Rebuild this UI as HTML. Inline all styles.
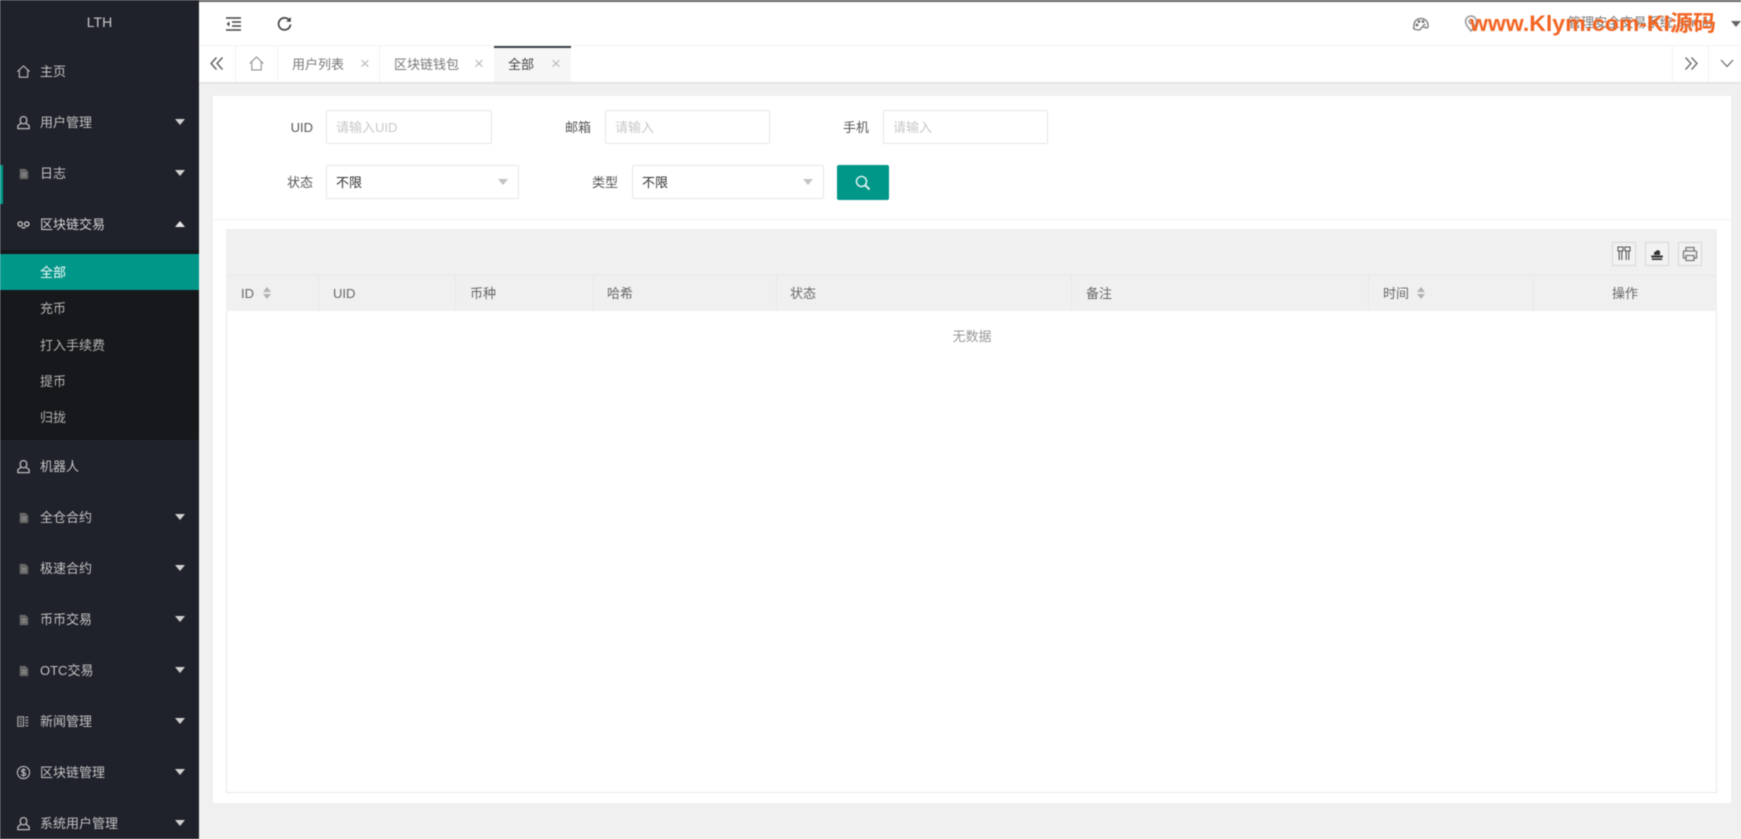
<!DOCTYPE html>
<html lang="zh"><head><meta charset="utf-8"><title>LTH</title>
<style>
*{box-sizing:border-box;margin:0;padding:0}
html{width:1741px;height:839px;overflow:hidden;background:#f0f0f0}
body{position:relative;width:1741px;height:839px;overflow:hidden;background:#f0f0f0;font:13px/20px "Liberation Sans","Noto Sans CJK SC",sans-serif;color:#666;filter:blur(.45px)}
.a{position:absolute;white-space:nowrap}
#side{position:absolute;left:0;top:0;width:199px;height:839px;background:#1f222b;overflow:hidden}
.m{position:absolute;left:40px;color:#c4c4c4;line-height:20px;white-space:nowrap;margin-top:1px}
.ic{position:absolute;left:16px;width:15px;height:15px}
.cd,.cu{position:absolute;left:175px;width:0;height:0;border-left:5.5px solid transparent;border-right:5.5px solid transparent}
.cd{border-top:6px solid #d0d0d0}.cu{border-bottom:6px solid #e8e8e8}
.inp{position:absolute;height:34px;background:#fff;border:1px solid #e6e6e6;border-radius:2px;padding-left:9px;line-height:33px;color:#c8c8c8}
.sel{color:#333}
.sel:after{content:"";position:absolute;right:10px;top:13px;border-left:5.5px solid transparent;border-right:5.5px solid transparent;border-top:6px solid #c2c2c2}
.lb{position:absolute;text-align:right;width:60px;line-height:20px;color:#555;margin-top:1px}
.div{position:absolute;top:46px;height:36px;width:1px;background:#f3f3f3}
.tt{position:absolute;top:55px;line-height:20px;color:#777}
.x{position:absolute;top:54px;line-height:20px;color:#bbb;font-size:17px}
.th{position:absolute;top:294px;transform:translateY(-50%);color:#666;line-height:20px}
.vl{position:absolute;top:275px;height:36px;width:1px;background:#e8e8e8}
.tb{position:absolute;top:242px;width:24px;height:24px;border:1px solid #d8d8d8;background:#f2f2f2}
.sort{position:absolute;width:8px;height:12px}
</style></head><body>
<div class="a" style="left:199px;top:0;width:1542px;height:46px;background:#fff;border-bottom:1px solid #f6f6f6"></div>
<div class="a" style="left:199px;top:0;width:1542px;height:1.5px;background:#666"></div>
<div class="a" style="left:199px;top:46px;width:1542px;height:36px;background:#fff;box-shadow:0 1px 2px rgba(0,0,0,.1)"></div>

<div id="side">
<div class="a" style="left:0;top:0;width:199px;height:45px;background:#1f222b;text-align:center;line-height:44px;font-size:14px;color:#c8c8c8">LTH</div>
<div class="a" style="left:0;top:165px;width:3px;height:39px;background:#009688"></div>
<div class="a" style="left:0;top:250px;width:199px;height:190px;background:#17181c"></div>
<div class="a" style="left:0;top:254px;width:199px;height:36px;background:#009688"></div>

<svg class="ic" style="top:64px" viewBox="0 0 16 16" fill="none" stroke="#bbb" stroke-width="1.2"><path d="M1.5 8.2 8 2l6.500 6.200M3.500 7v7h9V7"/></svg>
<div class="m" style="top:61px">主页</div>

<svg class="ic" style="top:115px" viewBox="0 0 16 16" fill="none" stroke="#bbb" stroke-width="1.4"><path d="M8 1.700c2.200 0 3.500 1.600 3.500 3.700S10.200 9.500 8 9.500 4.500 7.500 4.500 5.400 5.800 1.700 8 1.700zM5.500 8.500 2 11.500v3h12v-3l-3.500-3"/></svg>
<div class="m" style="top:112px">用户管理</div><div class="cd" style="top:119px"></div>

<svg class="ic" style="top:166px" viewBox="0 0 16 16"><path d="M4 3h6l3 3v8H4z" fill="#666"/><path d="M6 8h5M6 10.500h5" stroke="#999"/></svg>
<div class="m" style="top:163px">日志</div><div class="cd" style="top:170px"></div>

<svg class="ic" style="top:217px" viewBox="0 0 16 16" fill="none" stroke="#ccc" stroke-width="1.400"><circle cx="4.500" cy="7.500" r="2.300"/><circle cx="11.500" cy="7.500" r="2.300"/><path d="M6 11.500h4"/></svg>
<div class="m" style="top:214px;color:#d6d6d6">区块链交易</div><div class="cu" style="top:221px"></div>

<div class="m" style="top:262px;color:#fff">全部</div>
<div class="m" style="top:298px;color:#b4b4b4">充币</div>
<div class="m" style="top:335px;color:#b4b4b4">打入手续费</div>
<div class="m" style="top:371px;color:#b4b4b4">提币</div>
<div class="m" style="top:407px;color:#b4b4b4">归拢</div>

<svg class="ic" style="top:459px" viewBox="0 0 16 16" fill="none" stroke="#bbb" stroke-width="1.400"><path d="M8 1.700c2.200 0 3.500 1.600 3.500 3.700S10.200 9.500 8 9.500 4.500 7.500 4.500 5.400 5.800 1.700 8 1.700zM5.500 8.500 2 11.500v3h12v-3l-3.500-3"/></svg>
<div class="m" style="top:456px">机器人</div>

<svg class="ic" style="top:510px" viewBox="0 0 16 16"><path d="M4 3h6l3 3v8H4z" fill="#666"/><path d="M6 8h5M6 10.500h5" stroke="#999"/></svg>
<div class="m" style="top:507px">全仓合约</div><div class="cd" style="top:514px"></div>

<svg class="ic" style="top:561px" viewBox="0 0 16 16"><path d="M4 3h6l3 3v8H4z" fill="#666"/><path d="M6 8h5M6 10.500h5" stroke="#999"/></svg>
<div class="m" style="top:558px">极速合约</div><div class="cd" style="top:565px"></div>

<svg class="ic" style="top:612px" viewBox="0 0 16 16"><path d="M4 3h6l3 3v8H4z" fill="#666"/><path d="M6 8h5M6 10.500h5" stroke="#999"/></svg>
<div class="m" style="top:609px">币币交易</div><div class="cd" style="top:616px"></div>

<svg class="ic" style="top:663px" viewBox="0 0 16 16"><path d="M4 3h6l3 3v8H4z" fill="#666"/><path d="M6 8h5M6 10.500h5" stroke="#999"/></svg>
<div class="m" style="top:660px">OTC交易</div><div class="cd" style="top:667px"></div>

<svg class="ic" style="top:714px" viewBox="0 0 16 16" fill="none" stroke="#aaa" stroke-width="1.300"><path d="M2 3h6v10H2zM4 5.500h2M4 8h2M4 10.500h2M10 3.500h3M10 6.500h3M10 9.500h3M10 12.500h3"/></svg>
<div class="m" style="top:711px">新闻管理</div><div class="cd" style="top:718px"></div>

<svg class="ic" style="top:765px" viewBox="0 0 16 16" fill="none" stroke="#bbb" stroke-width="1.200"><circle cx="8" cy="8" r="6.500"/><path d="M10.300 5.800C9.800 5 9 4.800 8 4.800c-1.300 0-2.200.6-2.200 1.600C5.800 8.900 10.300 7.200 10.300 9.700c0 1-1 1.600-2.300 1.600-1.100 0-1.900-.4-2.400-1.200M8 3.500v9"/></svg>
<div class="m" style="top:762px">区块链管理</div><div class="cd" style="top:769px"></div>

<svg class="ic" style="top:816px" viewBox="0 0 16 16" fill="none" stroke="#bbb" stroke-width="1.400"><path d="M8 1.700c2.200 0 3.500 1.600 3.500 3.700S10.200 9.500 8 9.500 4.500 7.500 4.500 5.400 5.800 1.700 8 1.700zM5.500 8.500 2 11.500v3h12v-3l-3.500-3"/></svg>
<div class="m" style="top:813px">系统用户管理</div><div class="cd" style="top:820px"></div>
</div>

<!-- header icons -->
<svg class="a" style="left:226px;top:17px" width="15" height="14" viewBox="0 0 15 14" fill="none" stroke="#444" stroke-width="1.500"><path d="M0 1h15M6 5h9M6 9h9M0 13h15"/><path d="M3.500 4.500 0.500 7l3 2.500z" fill="#444" stroke="none"/></svg>
<svg class="a" style="left:277px;top:16px" width="15" height="15" viewBox="0 0 15 15" fill="none" stroke="#444" stroke-width="1.700"><path d="M12.500 4.500A6 6 0 1 0 13.500 8.500"/><path d="M13.800 1v4.700H9.100z" fill="#444" stroke="none"/></svg>

<svg class="a" style="left:1413px;top:16px" width="16" height="16" viewBox="0 0 16 16" fill="none" stroke="#777" stroke-width="1.300"><path d="M1 11.500C.3 6 3.500 2.500 8 2.500s7.500 3.500 7 8c-.2 1.500-2 1.500-3 1s-2.500-.8-3.500.2-1 2.300-2.500 2.300c-2.500 0-5-1-5.500-1.500z"/><circle cx="4" cy="9" r=".8" fill="#777"/><circle cx="6" cy="5.500" r=".8" fill="#777"/><circle cx="10" cy="5.500" r=".8" fill="#777"/><path d="M12.500 8l-3 2"/></svg>
<svg class="a" style="left:1464px;top:15px" width="14" height="18" viewBox="0 0 14 18" fill="none" stroke="#999" stroke-width="1.500"><path d="M7 16C3 11 1.500 9 1.500 6.500a5.500 5.500 0 0 1 11 0C12.500 9 11 11 7 16z"/><circle cx="7" cy="6.500" r="2"/></svg>
<div class="a" style="left:1568px;top:13px;color:#777;letter-spacing:.1px">管理安全交易系统 admin</div>
<div class="a" style="left:1731px;top:21px;border-left:5.500px solid transparent;border-right:5.500px solid transparent;border-top:6px solid #666"></div>
<svg class="a" style="left:1465px;top:4px" width="260" height="36"><text x="5" y="27" textLength="246" lengthAdjust="spacingAndGlyphs" font-family="Liberation Sans,Noto Sans CJK SC,sans-serif" font-size="22" font-weight="bold" fill="#f26522">www.Klym.com-KI源码</text></svg>

<!-- tabs -->
<svg class="a" style="left:210px;top:57px" width="14" height="13" viewBox="0 0 14 13" fill="none" stroke="#555" stroke-width="1.300"><path d="M6.500.5 1 6.500l5.500 6M12.500.5 7 6.500l5.500 6"/></svg>
<div class="div" style="left:235px"></div>
<svg class="a" style="left:249px;top:56px" width="15" height="15" viewBox="0 0 15 15" fill="none" stroke="#888" stroke-width="1"><path d="M.7 7.500 7.500 1l6.800 6.500M2.800 6v8h9.400V6"/></svg>
<div class="div" style="left:277px"></div>
<div class="tt" style="left:292px">用户列表</div><div class="x" style="left:360px">×</div>
<div class="div" style="left:379px"></div>
<div class="tt" style="left:394px">区块链钱包</div><div class="x" style="left:474px">×</div>
<div class="a" style="left:494px;top:46px;width:77px;height:36px;background:#f6f6f6;border-top:2px solid #393d49"></div>
<div class="tt" style="left:508px;color:#444">全部</div><div class="x" style="left:551px">×</div>
<div class="div" style="left:1672px"></div>
<svg class="a" style="left:1684px;top:57px" width="14" height="13" viewBox="0 0 14 13" fill="none" stroke="#666" stroke-width="1.300"><path d="M1.500.5 7 6.500l-5.500 6M7.500.5 13 6.500l-5.500 6"/></svg>
<div class="div" style="left:1708px"></div>
<svg class="a" style="left:1720px;top:59px" width="14" height="9" viewBox="0 0 14 9" fill="none" stroke="#666" stroke-width="1.200"><path d="M1 1l6 6.500L13 1"/></svg>

<!-- card -->
<div class="a" style="left:213px;top:96px;width:1518px;height:707px;background:#fff"></div>
<div class="a" style="left:213px;top:219px;width:1518px;height:1px;background:#f3f3f3"></div>

<div class="lb" style="left:253px;top:117px">UID</div>
<div class="inp" style="left:326px;top:110px;width:166px">请输入UID</div>
<div class="lb" style="left:531px;top:117px">邮箱</div>
<div class="inp" style="left:605px;top:110px;width:165px">请输入</div>
<div class="lb" style="left:809px;top:117px">手机</div>
<div class="inp" style="left:883px;top:110px;width:165px">请输入</div>

<div class="lb" style="left:253px;top:172px">状态</div>
<div class="inp sel" style="left:326px;top:165px;width:193px">不限</div>
<div class="lb" style="left:558px;top:172px">类型</div>
<div class="inp sel" style="left:632px;top:165px;width:192px">不限</div>
<div class="a" style="left:837px;top:165px;width:52px;height:35px;background:#009688;border-radius:2px"></div>
<svg class="a" style="left:855px;top:175px" width="16" height="16" viewBox="0 0 16 16" fill="none" stroke="#d5f0ec" stroke-width="1.600"><circle cx="6.500" cy="6.500" r="5"/><path d="M10.500 10.500l4 4" stroke-width="2.200"/></svg>

<!-- table -->
<div class="a" style="left:226px;top:229px;width:1491px;height:564px;border:1px solid #e8e8e8;background:#fff"></div>
<div class="a" style="left:226px;top:229px;width:1491px;height:82px;background:#f0f0f0"></div>
<div class="a" style="left:226px;top:275px;width:1491px;height:1px;background:#e8e8e8"></div>

<div class="tb" style="left:1612px"><svg width="22" height="22" viewBox="0 0 22 22" fill="none" stroke="#555" stroke-width="1.100"><path d="M5 4h5v4H5zM12 4h5v4h-5zM6.200 8v9M8.800 8v9M13.200 8v9M15.800 8v9"/></svg></div>
<div class="tb" style="left:1645px"><svg width="22" height="22" viewBox="0 0 22 22"><path d="M5 12.500h12l-1 4.500H6z" fill="#333"/><path d="M8 12V9.500l3.500-2.500 2.500 1v4z" fill="#333"/><path d="M4.500 15h13" stroke="#f2f2f2" stroke-width=".8"/></svg></div>
<div class="tb" style="left:1678px"><svg width="22" height="22" viewBox="0 0 22 22" fill="none" stroke="#777" stroke-width="1.300"><path d="M7 8V4.500h8V8M7 15H4.500V8.500a.5.500 0 0 1 .5-.5h12a.5.500 0 0 1 .5.500V15H15M7 12.500h8v5H7z"/></svg></div>

<div class="th" style="left:241px">ID</div>
<svg class="sort" style="left:263px;top:287px" viewBox="0 0 8 12" fill="#b2b2b2"><path d="M4 0l4 5H0zM4 12l4-5H0z"/></svg>
<div class="vl" style="left:318px"></div>
<div class="th" style="left:333px">UID</div>
<div class="vl" style="left:455px"></div>
<div class="th" style="left:470px">币种</div>
<div class="vl" style="left:593px"></div>
<div class="th" style="left:607px">哈希</div>
<div class="vl" style="left:776px"></div>
<div class="th" style="left:790px">状态</div>
<div class="vl" style="left:1071px"></div>
<div class="th" style="left:1086px">备注</div>
<div class="vl" style="left:1368px"></div>
<div class="th" style="left:1383px">时间</div>
<svg class="sort" style="left:1417px;top:287px" viewBox="0 0 8 12" fill="#b2b2b2"><path d="M4 0l4 5H0zM4 12l4-5H0z"/></svg>
<div class="vl" style="left:1533px"></div>
<div class="th" style="left:1612px">操作</div>
<div class="a" style="left:942px;top:327px;width:60px;text-align:center;color:#999">无数据</div>
</body></html>
